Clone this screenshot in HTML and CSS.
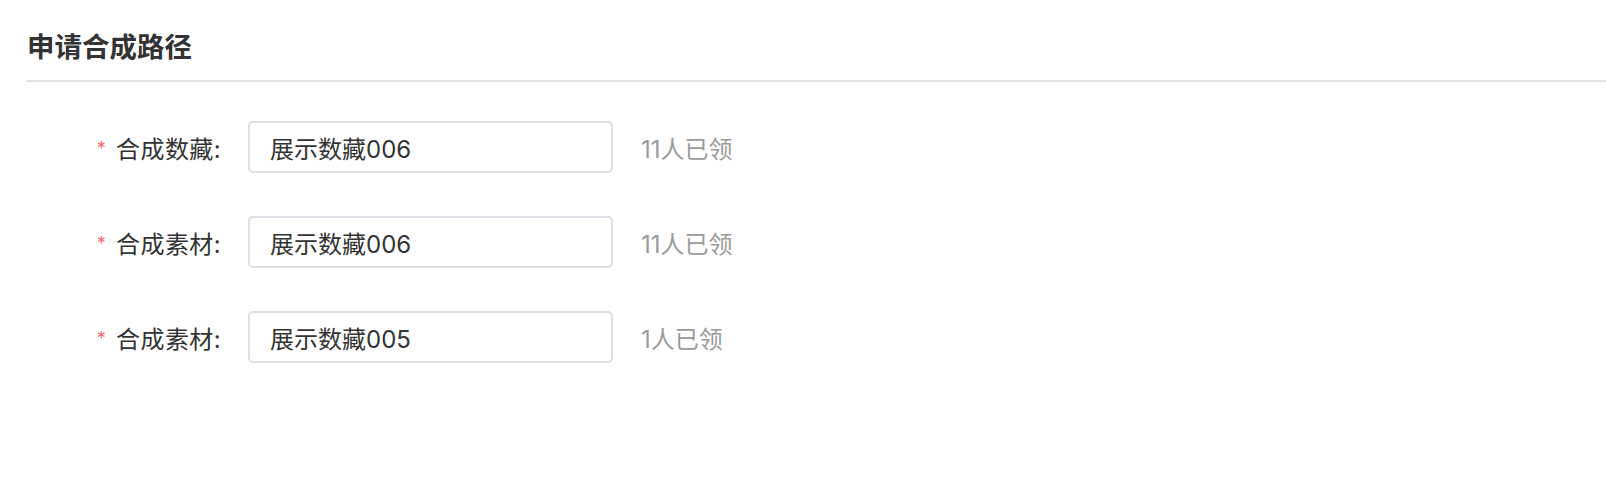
FILE: index.html
```html
<!DOCTYPE html>
<html lang="zh-CN">
<head>
<meta charset="utf-8">
<title>申请合成路径</title>
<link rel="stylesheet" href="styles.css">
</head>
<body>
<div class="panel">
  <div class="panel-header">
    <h2 class="panel-title">申请合成路径</h2>
  </div>
  <form class="form">
    <div class="form-row">
      <label class="form-label"><span class="req">*</span>合成数藏:</label>
      <input class="form-input" type="text" value="展示数藏006" readonly>
      <span class="form-hint">11人已领</span>
    </div>
    <div class="form-row">
      <label class="form-label"><span class="req">*</span>合成素材:</label>
      <input class="form-input" type="text" value="展示数藏006" readonly>
      <span class="form-hint">11人已领</span>
    </div>
    <div class="form-row">
      <label class="form-label"><span class="req">*</span>合成素材:</label>
      <input class="form-input" type="text" value="展示数藏005" readonly>
      <span class="form-hint">1人已领</span>
    </div>
  </form>
</div>
</body>
</html>
```

FILE: styles.css
```css
html, body {
  margin: 0;
  padding: 0;
  background: #ffffff;
}

body {
  font-family: Inter, "Noto Sans CJK SC", sans-serif;
  color: #333333;
}

.panel {
  width: 1606px;
  height: 478px;
}

.panel-header {
  margin-left: 26px;
  padding: 32px 0 21px 1px;
  border-bottom: 2px solid #dfe3e8;
}

.panel-title {
  margin: 0;
  font-family: "Noto Sans CJK SC", sans-serif;
  font-size: 27.5px;
  line-height: 27px;
  font-weight: 600;
  color: #333333;
}

.form {
  display: flex;
  flex-direction: column;
  gap: 43px;
  padding-top: 39px;
}

.form-row {
  display: flex;
  align-items: center;
  height: 52px;
}

.form-label {
  width: 221px;
  box-sizing: border-box;
  text-align: right;
  font-size: 24px;
  letter-spacing: 0.4px;
  color: #333333;
  white-space: nowrap;
}

.req {
  color: #f56c6c;
  font-size: 18px;
  margin-right: 10px;
  position: relative;
  top: -3px;
}

.form-input {
  margin-left: 27px;
  width: 365px;
  height: 52px;
  box-sizing: border-box;
  border: 2px solid #dcdfe6;
  border-radius: 5px;
  padding: 0 20px;
  font-family: inherit;
  font-size: 24px;
  color: #333333;
  background: #ffffff;
  outline: none;
}

.form-hint {
  margin-left: 28px;
  font-size: 24px;
  color: #9a9a9a;
}
```
